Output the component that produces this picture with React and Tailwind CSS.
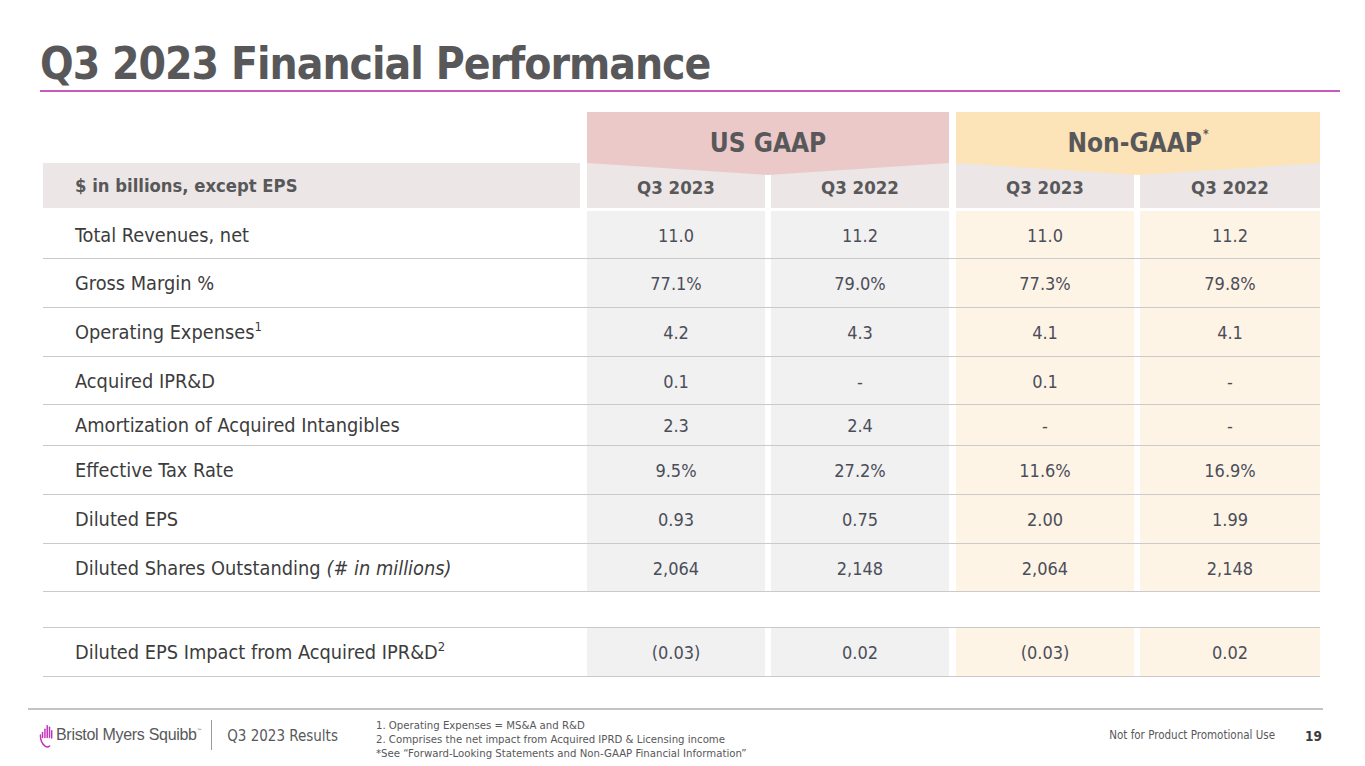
import React from "react";

const rows = [
  { label: <>Total Revenues, net</>, v: ["11.0", "11.2", "11.0", "11.2"], h: "h-[48px]" },
  { label: <>Gross Margin %</>, v: ["77.1%", "79.0%", "77.3%", "79.8%"], h: "h-[49px]" },
  { label: <>Operating Expenses<sup className="text-[13px] align-[4px]">1</sup></>, v: ["4.2", "4.3", "4.1", "4.1"], h: "h-[49px]" },
  { label: <>Acquired IPR&amp;D</>, v: ["0.1", "-", "0.1", "-"], h: "h-[48px]" },
  { label: <>Amortization of Acquired Intangibles</>, v: ["2.3", "2.4", "-", "-"], h: "h-[41px]" },
  { label: <>Effective Tax Rate</>, v: ["9.5%", "27.2%", "11.6%", "16.9%"], h: "h-[49px]" },
  { label: <>Diluted EPS</>, v: ["0.93", "0.75", "2.00", "1.99"], h: "h-[49px]" },
  { label: <>Diluted Shares Outstanding<i className="ml-[6px]">(# in millions)</i></>, v: ["2,064", "2,148", "2,064", "2,148"], h: "h-[48px]" },
];

const colW = ["w-[178px]", "w-[178px]", "w-[178px]", "w-[180px]"];
const colMl = ["ml-[7px]", "ml-[6px]", "ml-[7px]", "ml-[6px]"];
const colBg = ["bg-[#f1f1f1]", "bg-[#f1f1f1]", "bg-[#fef4e6]", "bg-[#fef4e6]"];

function Row({ r }) {
  return (
    <div className={`flex border-b border-[#cacaca] ${r.h}`}>
      <div className="w-[537px] flex items-center pl-[32px] pt-[2px] text-[19.8px] text-[#3c3c3c]">{r.label}</div>
      {r.v.map((v, i) => (
        <div key={i} className={`${colW[i]} ${colMl[i]} ${colBg[i]} flex items-center justify-center pt-[1px] text-[18px] text-[#4b4e59]`}>
          {v}
        </div>
      ))}
    </div>
  );
}

function Hand() {
  return (
    <svg width="15" height="25" viewBox="0 0 14 24" fill="none" stroke="#c22fbd" strokeWidth="1.4" strokeLinecap="round">
      <path d="M5.5 14 V6" />
      <path d="M7.7 14 V2.5" />
      <path d="M9.9 14 V4" />
      <path d="M12 14.5 V7.5" />
      <path d="M3.2 14 V9" />
      <path d="M1.2 11.5 C1 16 2.5 20 6 22.5 C7.5 23.3 9 23 10 22" />
    </svg>
  );
}

export default function App() {
  return (
    <div className="w-[1365px] h-[766px] bg-white overflow-hidden flex flex-col" style={{ fontFamily: '"DejaVu Sans Condensed", "DejaVu Sans", sans-serif' }}>
      <h1 className="pl-[40px] pt-[39px] text-[44px] leading-[50px] font-bold text-[#58585a] tracking-[-1px]">
        Q3 2023 Financial Performance
      </h1>
      <div className="ml-[40px] mt-[1px] w-[1300px] h-[2px] bg-[#c65bbd]" />

      <div className="ml-[43px] w-[1277px] mt-[20px] flex flex-col">
        {/* group headers */}
        <div className="flex relative z-10">
          <div className="w-[544px]" />
          <div className="w-[362px] h-[51px] bg-[#ecc9c9] relative flex items-center justify-center pt-[12px]">
            <span className="text-[26px] font-bold text-[#58585a]">US GAAP</span>
            <div className="absolute left-0 right-0 top-full h-[12px] bg-[#ecc9c9] [clip-path:polygon(0_0,100%_0,50%_100%)]" />
          </div>
          <div className="w-[364px] ml-[7px] h-[51px] bg-[#fde3b8] relative flex items-center justify-center pt-[12px]">
            <span className="text-[26px] font-bold text-[#58585a]">
              Non-GAAP<sup className="text-[12px] align-[8px] ml-[1px]">*</sup>
            </span>
            <div className="absolute left-0 right-0 top-full h-[12px] bg-[#fde3b8] [clip-path:polygon(0_0,100%_0,50%_100%)]" />
          </div>
        </div>
        {/* column headers */}
        <div className="flex h-[45px]">
          <div className="w-[537px] bg-[#ece6e6] flex items-center pl-[32px] text-[18.3px] font-bold text-[#58585a]">
            $ in billions, except EPS
          </div>
          {["Q3 2023", "Q3 2022", "Q3 2023", "Q3 2022"].map((t, i) => (
            <div key={i} className={`${colW[i]} ${colMl[i]} bg-[#ece6e6] flex items-center justify-center pt-[4px] text-[18.5px] font-bold text-[#58585a]`}>
              {t}
            </div>
          ))}
        </div>
        <div className="mt-[3px] flex flex-col">
          {rows.map((r, i) => (
            <Row key={i} r={r} />
          ))}
        </div>
        <div className="mt-[35px] border-t border-[#cacaca]">
          <Row r={{ label: <>Diluted EPS Impact from Acquired IPR&amp;D<sup className="text-[13px] align-[4px]">2</sup></>, v: ["(0.03)", "0.02", "(0.03)", "0.02"], h: "h-[49px]" }} />
        </div>
      </div>

      {/* footer */}
      <div className="ml-[28px] w-[1295px] mt-[31px] h-[2px] bg-[#c4c4c4]" />
      <div className="flex items-start pl-[39px] mt-[10px]">
        <div className="flex items-center h-[30px]">
          <Hand />
          <span className="ml-[2px] text-[16px] text-[#58585a] tracking-[-0.3px]" style={{ fontFamily: '"Liberation Sans", Arial, sans-serif' }}>
            Bristol Myers Squibb
          </span>
          <span className="text-[6px] text-[#58585a] self-start mt-[6px]">™</span>
          <div className="ml-[9px] w-px h-[30px] bg-[#9a9a9a]" />
          <span className="ml-[15px] text-[15px] text-[#58585a] pt-[2px]">Q3 2023 Results</span>
        </div>
        <div className="ml-[38px] -mt-[1px] text-[11.3px] leading-[14px] text-[#58585a]">
          <div>1. Operating Expenses = MS&amp;A and R&amp;D</div>
          <div>2. Comprises the net impact from Acquired IPRD &amp; Licensing income</div>
          <div>*See “Forward-Looking Statements and Non-GAAP Financial Information”</div>
        </div>
        <div className="ml-auto mr-[43px] flex items-center h-[30px] pt-[2px]">
          <span className="text-[11.5px] text-[#58585a]">Not for Product Promotional Use</span>
          <span className="ml-[30px] text-[13.5px] font-bold text-[#3c3c3c]">19</span>
        </div>
      </div>
    </div>
  );
}
